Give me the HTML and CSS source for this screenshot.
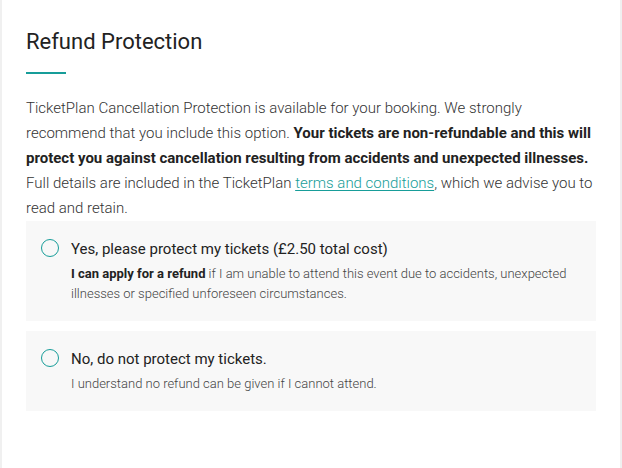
FILE: index.html
```html
<!DOCTYPE html>
<html lang="en">
<head>
<meta charset="utf-8">
<title>Refund Protection</title>
<link rel="stylesheet" href="styles.css">
</head>
<body>
<section class="card">
  <h1 class="title">Refund Protection</h1>
  <div class="rule"></div>
  <p class="intro">TicketPlan Cancellation Protection is available for your booking. We strongly recommend that you include this option. <strong>Your tickets are non-refundable and this will protect you against cancellation resulting from accidents and unexpected illnesses.</strong> Full details are included in the TicketPlan <a href="#" class="link">terms and conditions</a>, which we advise you to read and retain.</p>
  <div class="options">
    <label class="option">
      <span class="radio"></span>
      <span class="option-body">
        <span class="option-label">Yes, please protect my tickets (£2.50 total cost)</span>
        <span class="option-desc"><strong>I can apply for a refund</strong> if I am unable to attend this event due to accidents, unexpected illnesses or specified unforeseen circumstances.</span>
      </span>
    </label>
    <label class="option">
      <span class="radio"></span>
      <span class="option-body">
        <span class="option-label">No, do not protect my tickets.</span>
        <span class="option-desc">I understand no refund can be given if I cannot attend.</span>
      </span>
    </label>
  </div>
</section>
</body>
</html>
```

FILE: styles.css
```css
html, body {
  margin: 0;
  padding: 0;
}
body {
  background: #f0f0f0;
  font-family: Roboto, "Liberation Sans", Arial, sans-serif;
  color: #333;
  width: 622px;
  height: 468px;
  overflow: hidden;
}
.card {
  background: #fff;
  margin: 0 2px;
  padding: 28px 24px 0;
  height: 468px;
  box-sizing: border-box;
}
.title {
  margin: 0;
  font-size: 22px;
  line-height: 28px;
  font-weight: 400;
  color: #222;
}
.rule {
  width: 40px;
  height: 2px;
  background: #179d99;
  margin-top: 16px;
}
.intro {
  margin: 22px 0 0;
  font-size: 15px;
  line-height: 25px;
  font-weight: 300;
  color: #333;
}
.intro strong {
  font-weight: 700;
  color: #222;
}
.link {
  color: #179d99;
  text-decoration: underline;
  text-underline-offset: 2px;
}
.options {
  display: flex;
  flex-direction: column;
  gap: 10px;
}
.option {
  display: flex;
  align-items: flex-start;
  gap: 12px;
  background: #f8f8f8;
  padding: 16px 16px 17px 15px;
  cursor: pointer;
}
.radio {
  flex: none;
  width: 18px;
  height: 18px;
  box-sizing: border-box;
  border: 1.5px solid #179d99;
  border-radius: 50%;
  margin-top: 2px;
}
.option-body {
  display: flex;
  flex-direction: column;
  gap: 3px;
}
.option-label {
  font-size: 15px;
  line-height: 24px;
  font-weight: 400;
  color: #222;
}
.option-desc {
  font-size: 13px;
  line-height: 20px;
  font-weight: 300;
  color: #444;
}
.option-desc strong {
  font-weight: 700;
  color: #222;
}
```
